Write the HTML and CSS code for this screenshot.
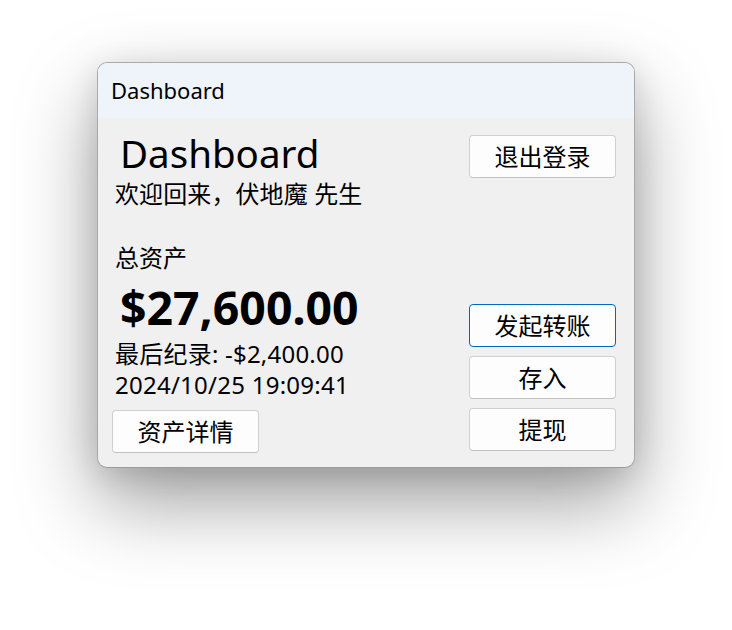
FILE: index.html
```html
<!DOCTYPE html>
<html lang="zh-CN">
<head>
<meta charset="utf-8">
<title>Dashboard</title>
<link rel="stylesheet" href="styles.css">
</head>
<body>
<div class="window">
  <div class="titlebar">Dashboard</div>
  <div class="content">
    <div class="left">
      <div class="heading">Dashboard</div>
      <div class="welcome">欢迎回来，伏地魔 先生</div>
      <div class="label">总资产</div>
      <div class="amount">$27,600.00</div>
      <div class="last">最后纪录: -$2,400.00</div>
      <div class="date">2024/10/25 19:09:41</div>
      <button class="btn detail">资产详情</button>
    </div>
    <div class="right">
      <button class="btn">退出登录</button>
      <div class="actions">
        <button class="btn focused">发起转账</button>
        <button class="btn">存入</button>
        <button class="btn">提现</button>
      </div>
    </div>
  </div>
</div>
</body>
</html>
```

FILE: styles.css
```css
html, body {
  margin: 0;
  background: #ffffff;
}
body {
  min-height: 630px;
  box-sizing: border-box;
  padding: 62px 0 0 97px;
  font-family: "Noto Sans", "Noto Sans CJK SC", sans-serif;
  color: #000;
}
.window {
  width: 538px;
  height: 406px;
  box-sizing: border-box;
  border: 1px solid #a9a9a9;
  border-bottom-color: #9c9c9c;
  border-radius: 10px;
  overflow: hidden;
  background: #f0f0f0;
  box-shadow: 0 34px 80px rgba(0,0,0,0.38), 0 6px 30px rgba(0,0,0,0.12);
  display: flex;
  flex-direction: column;
}
.titlebar {
  height: 55px;
  flex: none;
  background: #eef4f9;
  font-size: 22px;
  line-height: 55px;
  padding-left: 13px;
}
.content {
  flex: 1;
  display: flex;
  justify-content: space-between;
  padding: 0 18px 13px 14px;
}
.left {
  display: flex;
  flex-direction: column;
  align-items: flex-start;
}
.left > div {
  padding-left: 3px;
}
.heading {
  font-size: 38.5px;
  line-height: 40px;
  margin-top: 15px;
  margin-left: 5px;
}
.welcome {
  font-size: 24px;
  line-height: 32px;
  margin-top: 5px;
  letter-spacing: 0.1px;
}
.label {
  font-size: 24px;
  line-height: 32px;
  margin-top: 32px;
}
.amount {
  font-size: 46.4px;
  font-weight: 700;
  line-height: 52px;
  margin-top: 7px;
  margin-left: 5px;
}
.last {
  font-size: 24px;
  line-height: 31px;
  margin-top: 5px;
  letter-spacing: 0.22px;
}
.date {
  font-size: 24px;
  line-height: 31px;
  letter-spacing: 0.25px;
}
.btn {
  width: 147px;
  height: 43px;
  box-sizing: border-box;
  border: 1px solid #d0d0d0;
  border-bottom-color: #c2c2c2;
  border-radius: 4px;
  background: #fdfdfd;
  font-family: "Noto Sans", "Noto Sans CJK SC", sans-serif;
  font-size: 24px;
  line-height: 1;
  color: #000;
  padding: 0;
}
.btn.focused {
  border: 1px solid #0067c0;
}
.detail {
  margin-top: 10px;
}
.right {
  display: flex;
  flex-direction: column;
  justify-content: space-between;
  padding-top: 17px;
  padding-bottom: 3px;
}
.actions {
  display: flex;
  flex-direction: column;
  gap: 9px;
}
```
